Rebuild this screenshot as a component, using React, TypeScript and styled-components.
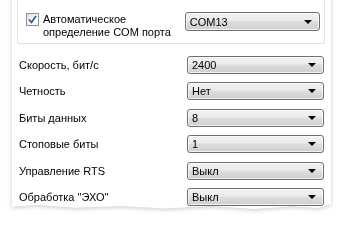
import React from 'react';
import styled, { createGlobalStyle } from 'styled-components';

const GlobalStyle = createGlobalStyle`
  html, body {
    margin: 0;
    padding: 0;
    background: #ffffff;
  }
  body {
    width: 345px;
    height: 233px;
    overflow: hidden;
    font-family: "Liberation Sans", Arial, sans-serif;
    font-size: 11px;
    color: #000;
  }
`;

const Stage = styled.div`
  padding: 0 14px 0 12px;
  filter: drop-shadow(0 1px 2px rgba(0, 0, 0, 0.22));
`;

const Paper = styled.div`
  height: 218px;
  background: #ffffff;
  padding: 0 6px 0 5px;
  clip-path: polygon(
    0 0, 100% 0, 100% 96.5%, 96% 98.2%, 88% 97.4%, 76% 98.6%, 62% 97.2%,
    48% 98.4%, 34% 97.2%, 20% 98%, 8% 96.8%, 0 97.6%
  );
`;

const GroupBox = styled.div`
  margin-top: -6px;
  height: 50px;
  border: 1px solid #dde3e8;
  border-top: none;
  border-radius: 0 0 3px 3px;
  box-sizing: border-box;
  padding: 18px 4px 0 8px;
  display: flex;
  align-items: flex-start;
`;

const CheckLabel = styled.label`
  width: 161px;
  display: flex;
  line-height: 13px;
  padding-top: 1px;
`;

const Box = styled.span`
  flex: none;
  width: 11px;
  height: 11px;
  border: 1px solid #8f8f8f;
  background: linear-gradient(135deg, #e0e0e0 0%, #ffffff 80%);
  display: flex;
  align-items: center;
  justify-content: center;
  margin-right: 4px;
`;

const Form = styled.div`
  display: grid;
  grid-template-columns: 168px 137px;
  grid-auto-rows: 18px;
  row-gap: 8.4px;
  align-items: center;
  padding: 12px 0 0 2px;
`;

const Label = styled.span`
  white-space: nowrap;
`;

const Combo = styled.div<{ $tall?: boolean }>`
  box-sizing: border-box;
  width: 137px;
  height: ${(p) => (p.$tall ? 19 : 18)}px;
  border: 1px solid #707070;
  border-radius: 3px;
  background: linear-gradient(#f2f2f2 0%, #ebebeb 45%, #dddddd 50%, #cfcfcf 100%);
  box-shadow: inset 0 0 0 1px rgba(255, 255, 255, 0.7);
  display: flex;
  align-items: center;
  justify-content: space-between;
  padding: 0 7px 0 4px;
`;

const Arrow = styled.span`
  width: 0;
  height: 0;
  border-left: 4px solid transparent;
  border-right: 4px solid transparent;
  border-top: 4px solid #000;
`;

const Select = ({ value, tall }: { value: string; tall?: boolean }) => (
  <Combo $tall={tall}>
    <span>{value}</span>
    <Arrow />
  </Combo>
);

const rows: [string, string][] = [
  ['Скорость, бит/с', '2400'],
  ['Четность', 'Нет'],
  ['Биты данных', '8'],
  ['Стоповые биты', '1'],
  ['Управление RTS', 'Выкл'],
  ['Обработка "ЭХО"', 'Выкл'],
];

export default function App() {
  return (
    <>
      <GlobalStyle />
      <Stage>
        <Paper>
          <GroupBox>
            <CheckLabel>
              <Box>
                <svg width="9" height="9" viewBox="0 0 9 9">
                  <path d="M1 4.5 L3.5 7.5 L8 1" fill="none" stroke="#2a4fa8" strokeWidth="1.6" />
                </svg>
              </Box>
              <span>
                Автоматическое
                <br />
                определение COM порта
              </span>
            </CheckLabel>
            <Select value="COM13" tall />
          </GroupBox>
          <Form>
            {rows.map(([label, value]) => (
              <React.Fragment key={label}>
                <Label>{label}</Label>
                <Select value={value} />
              </React.Fragment>
            ))}
          </Form>
        </Paper>
      </Stage>
    </>
  );
}
